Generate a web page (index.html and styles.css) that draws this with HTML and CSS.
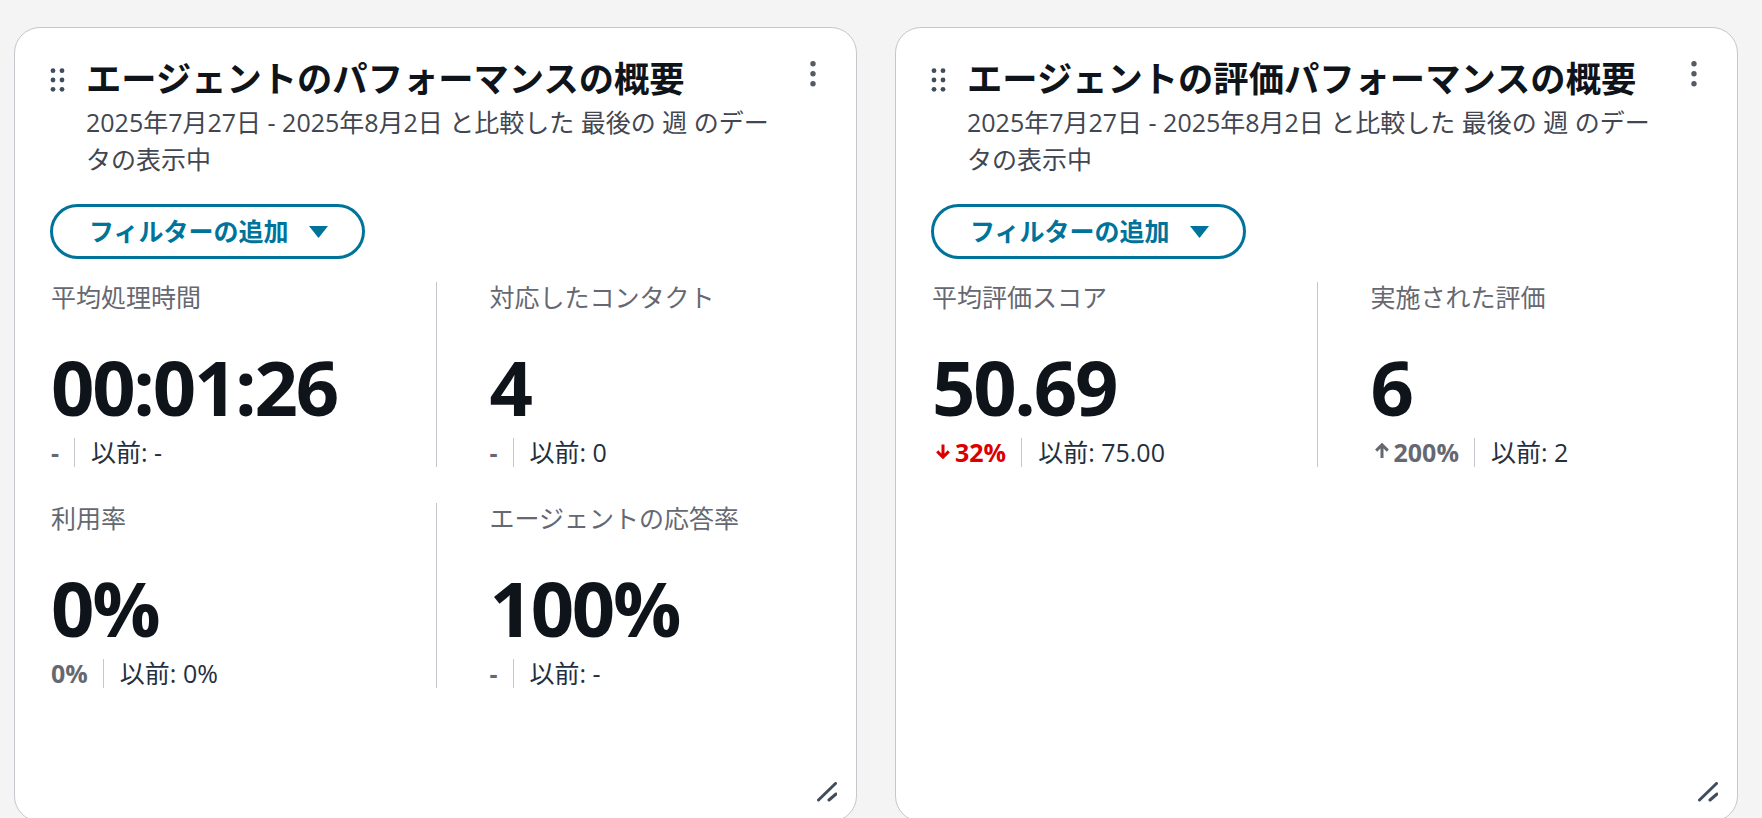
FILE: index.html
```html
<!DOCTYPE html>
<html lang="ja">
<head>
    <meta charset="UTF-8">
    <meta name="viewport" content="width=device-width, initial-scale=1.0">
    <title>エージェントダッシュボード</title>
    <link rel="stylesheet" href="styles.css">
</head>
<body>

    <main class="board">

        <!-- Widget 1 -->
        <section class="widget">
            <header class="widget-head">
                <svg class="drag" width="16" height="24" viewBox="0 0 16 24">
                    <circle cx="4" cy="2.7" r="2.4"/><circle cx="13" cy="2.7" r="2.4"/>
                    <circle cx="4" cy="12" r="2.4"/><circle cx="13" cy="12" r="2.4"/>
                    <circle cx="4" cy="21.3" r="2.4"/><circle cx="13" cy="21.3" r="2.4"/>
                </svg>
                <div class="head-text">
                    <h2 class="widget-title">エージェントのパフォーマンスの概要</h2>
                    <p class="widget-desc">2025年7月27日 - 2025年8月2日 と比較した 最後の 週 のデータの表示中</p>
                </div>
                <button class="menu" type="button">
                    <svg width="6" height="26" viewBox="0 0 6 26">
                        <circle cx="3" cy="2.8" r="2.7"/><circle cx="3" cy="12.8" r="2.7"/><circle cx="3" cy="22.8" r="2.7"/>
                    </svg>
                </button>
            </header>

            <button class="filter" type="button">
                フィルターの追加
                <svg width="19" height="12" viewBox="0 0 19 12"><polygon points="0,0 19,0 9.5,12"/></svg>
            </button>

            <div class="metrics">
                <div class="metric">
                    <div class="metric-label">平均処理時間</div>
                    <div class="metric-value">00:01:26</div>
                    <div class="metric-foot"><span class="delta">-</span><span class="prev">以前: -</span></div>
                </div>
                <div class="metric">
                    <div class="metric-label">対応したコンタクト</div>
                    <div class="metric-value">4</div>
                    <div class="metric-foot"><span class="delta">-</span><span class="prev">以前: 0</span></div>
                </div>
                <div class="metric">
                    <div class="metric-label">利用率</div>
                    <div class="metric-value">0%</div>
                    <div class="metric-foot"><span class="delta">0%</span><span class="prev">以前: 0%</span></div>
                </div>
                <div class="metric">
                    <div class="metric-label">エージェントの応答率</div>
                    <div class="metric-value">100%</div>
                    <div class="metric-foot"><span class="delta">-</span><span class="prev">以前: -</span></div>
                </div>
            </div>

            <svg class="resize" width="20" height="20" viewBox="0 0 20 20">
                <line x1="1.5" y1="18" x2="18.5" y2="1.5"/>
                <line x1="12" y1="18" x2="19" y2="12"/>
            </svg>
        </section>

        <!-- Widget 2 -->
        <section class="widget">
            <header class="widget-head">
                <svg class="drag" width="16" height="24" viewBox="0 0 16 24">
                    <circle cx="4" cy="2.7" r="2.4"/><circle cx="13" cy="2.7" r="2.4"/>
                    <circle cx="4" cy="12" r="2.4"/><circle cx="13" cy="12" r="2.4"/>
                    <circle cx="4" cy="21.3" r="2.4"/><circle cx="13" cy="21.3" r="2.4"/>
                </svg>
                <div class="head-text">
                    <h2 class="widget-title">エージェントの評価パフォーマンスの概要</h2>
                    <p class="widget-desc">2025年7月27日 - 2025年8月2日 と比較した 最後の 週 のデータの表示中</p>
                </div>
                <button class="menu" type="button">
                    <svg width="6" height="26" viewBox="0 0 6 26">
                        <circle cx="3" cy="2.8" r="2.7"/><circle cx="3" cy="12.8" r="2.7"/><circle cx="3" cy="22.8" r="2.7"/>
                    </svg>
                </button>
            </header>

            <button class="filter" type="button">
                フィルターの追加
                <svg width="19" height="12" viewBox="0 0 19 12"><polygon points="0,0 19,0 9.5,12"/></svg>
            </button>

            <div class="metrics">
                <div class="metric">
                    <div class="metric-label">平均評価スコア</div>
                    <div class="metric-value">50.69</div>
                    <div class="metric-foot">
                        <span class="delta down">
                            <svg width="18" height="16" viewBox="0 0 18 16"><path d="M11 1.5v12.5M5.2 8.4L11 14.2l5.8-5.8"/></svg>32%
                        </span>
                        <span class="prev">以前: 75.00</span>
                    </div>
                </div>
                <div class="metric">
                    <div class="metric-label">実施された評価</div>
                    <div class="metric-value">6</div>
                    <div class="metric-foot">
                        <span class="delta">
                            <svg width="18" height="16" viewBox="0 0 18 16"><path d="M11 15V2.5M5.2 7.6L11 1.8l5.8 5.8"/></svg>200%
                        </span>
                        <span class="prev">以前: 2</span>
                    </div>
                </div>
            </div>

            <svg class="resize" width="20" height="20" viewBox="0 0 20 20">
                <line x1="1.5" y1="18" x2="18.5" y2="1.5"/>
                <line x1="12" y1="18" x2="19" y2="12"/>
            </svg>
        </section>

    </main>

</body>
</html>
```

FILE: styles.css
```css
/* General */
body {
    margin: 0;
    height: 818px;
    overflow: hidden;
    background-color: #f4f4f4;
    font-family: "Open Sans", "Noto Sans CJK JP", sans-serif;
    color: #0f141a;
}

.board {
    display: grid;
    grid-template-columns: 1fr 1fr;
    gap: 38px;
    padding: 27px 24px 0 14px;
}

/* Widget card */
.widget {
    position: relative;
    box-sizing: border-box;
    height: 795px;
    padding: 28px 36px 0 36px;
    background: white;
    border: 1px solid #c6c6cd;
    border-radius: 26px;
}

/* Header */
.widget-head {
    display: flex;
    align-items: flex-start;
}

.drag {
    flex: none;
    margin: 12px 21px 0 -2px;
    fill: #414d5c;
}

.head-text {
    flex: 1;
    min-width: 0;
}

.widget-title {
    margin: 0;
    font-size: 35.3px;
    line-height: 44px;
    font-weight: 700;
}

.widget-desc {
    margin: 4px 0 0;
    font-size: 25px;
    line-height: 37px;
    color: #424650;
}

.menu {
    flex: none;
    margin: 5px 4px 0 28px;
    padding: 0;
    border: none;
    background: none;
    fill: #545b64;
    line-height: 0;
}

/* Filter button */
.filter {
    display: flex;
    align-items: center;
    gap: 20px;
    margin: 26px 0 0 -1px;
    padding: 6px 34px 6px 36px;
    font-family: inherit;
    font-size: 25px;
    line-height: 37px;
    font-weight: 700;
    color: #00739b;
    background: white;
    border: 3px solid #00739b;
    border-radius: 30px;
}

.filter svg {
    fill: #00739b;
}

/* Metrics */
.metrics {
    display: grid;
    grid-template-columns: 1fr 1fr;
    row-gap: 36px;
    margin-top: 23px;
}

.metric:nth-child(even) {
    border-left: 1px solid #c6c6cd;
    padding-left: 53px;
}

.metric-label {
    font-size: 25px;
    line-height: 30px;
    color: #656871;
}

.metric-value {
    margin-top: 33px;
    font-size: 76px;
    line-height: 84px;
    font-weight: 700;
    letter-spacing: -0.03em;
}

.metric-foot {
    display: flex;
    align-items: center;
    margin-top: 9px;
    font-size: 25px;
    line-height: 29px;
}

.delta {
    display: flex;
    align-items: center;
    gap: 5px;
    margin-right: 15px;
    font-weight: 700;
    color: #656871;
}

.delta svg {
    fill: none;
    stroke: currentColor;
    stroke-width: 3;
    margin-top: -3px;
}

.delta.down {
    color: #db0000;
}

.prev {
    padding-left: 16px;
    border-left: 1px solid #c6c6cd;
    color: #232f3e;
}

/* Resize handle */
.resize {
    position: absolute;
    right: 19px;
    bottom: 19px;
    stroke: #414d5c;
    stroke-width: 3;
    stroke-linecap: round;
}
```
